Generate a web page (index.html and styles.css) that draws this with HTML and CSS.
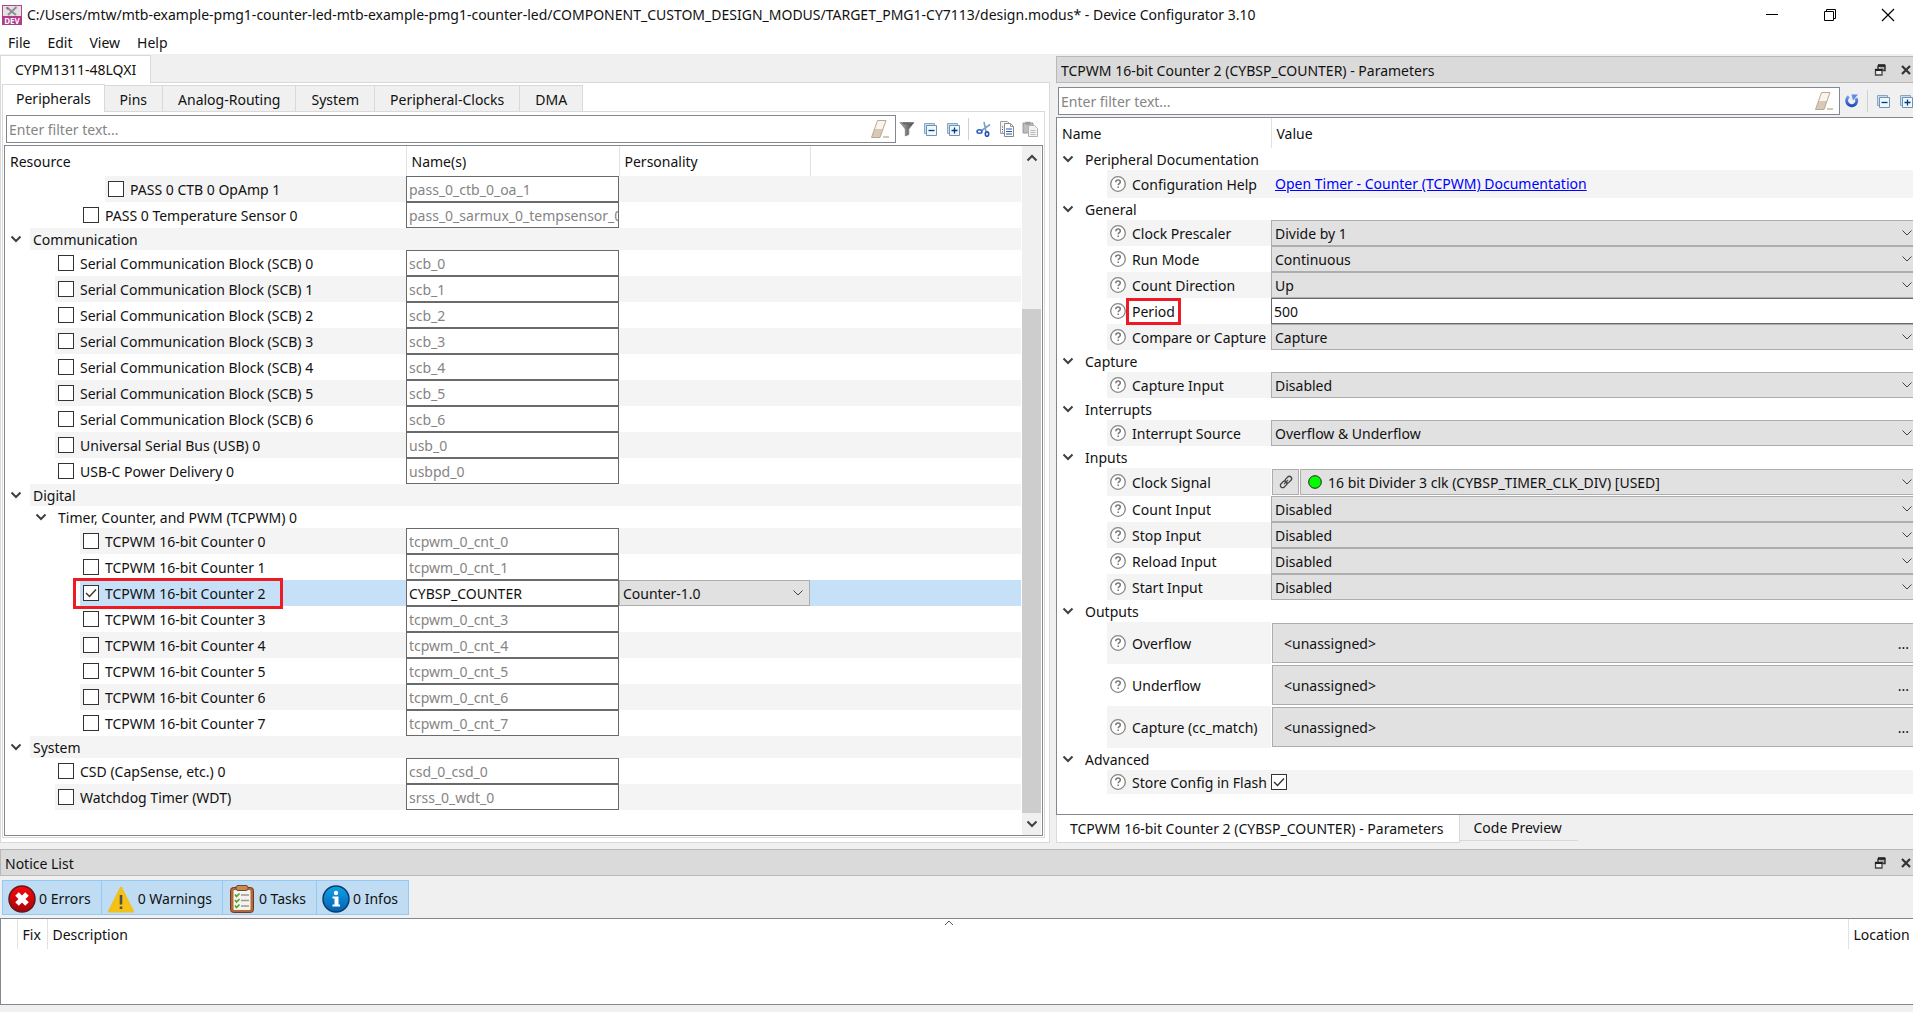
FILE: index.html
```html
<!DOCTYPE html>
<html lang="en">
<head>
<meta charset="utf-8">
<meta name="viewport" content="width=device-width, initial-scale=1">
<title>Device Configurator 3.10</title>
<link rel="stylesheet" href="styles.css">
</head>
<body>
<svg class="sprite" aria-hidden="true">
  <defs>
    <linearGradient id="g-eraser" x1="0" y1="0" x2="0" y2="1"><stop offset="0.5" stop-color="#faf4ec"/><stop offset="0.5" stop-color="#d8c8b6"/></linearGradient>
    <linearGradient id="g-funnel" x1="0" x2="1"><stop offset="0" stop-color="#b5b5b5"/><stop offset="1" stop-color="#3c3c3c"/></linearGradient>
    <linearGradient id="g-reload" x1="0" y1="0" x2="0" y2="1"><stop offset="0" stop-color="#6f9bee"/><stop offset="1" stop-color="#1f4fc0"/></linearGradient>
    <linearGradient id="g-error" x1="0" y1="0" x2="0" y2="1"><stop offset="0" stop-color="#f8090c"/><stop offset="1" stop-color="#a80308"/></linearGradient>
    <linearGradient id="g-info" x1="0" y1="0" x2="0" y2="1"><stop offset="0" stop-color="#0ea2e8"/><stop offset="1" stop-color="#0560b4"/></linearGradient>
    <symbol id="i-chev" viewBox="0 0 12 8"><path d="M1.500 1.500 6 6l4.500-4.500" fill="none" stroke="#404040" stroke-width="2"/></symbol>
    <symbol id="i-help" viewBox="0 0 16 16"><circle cx="8" cy="8" r="7.300" fill="#fff" stroke="#858585" stroke-width="1.300"/><path d="M5.800 6.300c0-1.400 1-2.200 2.300-2.200s2.200.8 2.200 1.900c0 1.600-2.100 1.600-2.100 3.200M8.200 10.400v1.600" fill="none" stroke="#777" stroke-width="1.500"/></symbol>
    <symbol id="i-eraser" viewBox="0 0 20 20"><path d="M7.500 1.500h8.500L10 18.500H1.500z" fill="url(#g-eraser)" stroke="#b9a894"/><path d="M13 18h6" stroke="#c5b49e" stroke-width="1.500"/></symbol>
    <symbol id="i-funnel" viewBox="0 0 16 16"><path d="M1 1.500h14L9.800 8v5.500L6.300 15V8z" fill="url(#g-funnel)" stroke="#777" stroke-width=".7"/><ellipse cx="8" cy="2.500" rx="5" ry="1" fill="#666"/></symbol>
    <symbol id="i-collapse" viewBox="0 0 16 16"><path d="M2.500 2.500h10v10h-10z" fill="#bfe0f8" stroke="#8aa6c0"/><path d="M4.500 4.500h10v10h-10z" fill="#eef8ff" stroke="#7690b0"/><path d="M6.500 9.500h6" stroke="#003c78" stroke-width="1.300"/></symbol>
    <symbol id="i-expand" viewBox="0 0 16 16"><path d="M2.500 2.500h10v10h-10z" fill="#bfe0f8" stroke="#8aa6c0"/><path d="M4.500 4.500h10v10h-10z" fill="#eef8ff" stroke="#7690b0"/><path d="M6.500 9.500h6M9.500 6.500v6" stroke="#003c78" stroke-width="1.300"/></symbol>
    <symbol id="i-cut" viewBox="0 0 16 16"><path d="M8 1 10 10.500M14 3.500 5 10" stroke="#7f9cc8" stroke-width="1.600"/><ellipse cx="3.500" cy="10.500" rx="2.500" ry="1.700" fill="none" stroke="#2a62c0" stroke-width="1.600"/><ellipse cx="11" cy="13" rx="1.700" ry="2.300" fill="none" stroke="#1c4fae" stroke-width="1.600"/></symbol>
    <symbol id="i-copy" viewBox="0 0 16 16"><path d="M1.500.5h7l2 2v10h-9z" fill="#f4f4f4" stroke="#a0a0a0"/><path d="M5.500 2.500h6l3 3v10h-9z" fill="#fff" stroke="#888"/><path d="M11.500 2.500v3h3" fill="none" stroke="#999"/><path d="M7 8h6M7 10.500h6M7 13h6M3 6h1M3 8.500h1M3 11h1" stroke="#2b57a8" stroke-width="1.200"/></symbol>
    <symbol id="i-paste" viewBox="0 0 16 16"><path d="M1 2h10v10H1z" fill="#bdbdbd" stroke="#999"/><path d="M3.500.8h5v3h-5z" fill="#9b9b9b"/><path d="M6.500 4.500h6l3 3v8h-9z" fill="#f2f2f2" stroke="#b0b0b0"/><path d="M8.500 9.500h5M8.500 11.500h5M8.500 13.500h5" stroke="#bbb"/></symbol>
    <symbol id="i-reload" viewBox="0 0 16 16"><path d="M4.800 3.600A5 5 0 1 0 12 5.200" fill="none" stroke="url(#g-reload)" stroke-width="3"/><path d="M7.500 1.500H14L9 7.500z" fill="#5d8ce8"/></symbol>
    <symbol id="i-float" viewBox="0 0 14 14"><path d="M5 2.500h7v5H9.500M5 2.500V6" fill="#aaa" stroke="#333" stroke-width="1.500"/><path d="M5 2.500h7" stroke="#222" stroke-width="2.500"/><path d="M2.500 6.500H9V12H2.500z" fill="#eee" stroke="#444" stroke-width="1.300"/><path d="M2 7h7.500" stroke="#222" stroke-width="2"/></symbol>
    <symbol id="i-close" viewBox="0 0 14 14"><path d="m3 3 8 8M11 3l-8 8" stroke="#333" stroke-width="2.200"/></symbol>
    <symbol id="i-link" viewBox="0 0 16 16"><g transform="rotate(-45 8 8)" fill="none" stroke="#444"><rect x="1" y="5.700" width="7.500" height="4.600" rx="2.300" stroke-width="1.300"/><rect x="7.500" y="5.700" width="7.500" height="4.600" rx="2.300" stroke-width="1.300"/><path d="M5 8h6"/></g></symbol>
  </defs>
</svg>

<header class="titlebar">
  <svg class="app-icon" viewBox="0 0 20 20" aria-hidden="true">
    <rect x=".5" y=".5" width="19" height="19" fill="#e4e0e4" stroke="#b6458f"/>
    <path d="M5 2.500 14 10M14.500 2 6 10" stroke="#8f8f96" stroke-width="2"/><path d="m4 2 3 1-2 2z" fill="#777"/>
    <rect y="11" width="20" height="9" fill="#b23a8b"/>
    <text x="10" y="18.500" text-anchor="middle" class="app-icon-text">DEV</text>
  </svg>
  <h1 class="title">C:/Users/mtw/mtb-example-pmg1-counter-led-mtb-example-pmg1-counter-led/COMPONENT_CUSTOM_DESIGN_MODUS/TARGET_PMG1-CY7113/design.modus* - Device Configurator 3.10</h1>
  <div class="win-buttons">
    <button class="win-btn" aria-label="Minimize"><svg viewBox="0 0 14 14"><path d="M1 6.500h12" stroke="#000"/></svg></button>
    <button class="win-btn" aria-label="Restore"><svg viewBox="0 0 14 14"><path d="M1.500 3.500h9v9h-9zM3.500 3.500v-2h9v9h-2" fill="none" stroke="#000"/></svg></button>
    <button class="win-btn" aria-label="Close"><svg viewBox="0 0 14 14"><path d="m1 1 12 12M13 1 1 13" stroke="#000" stroke-width="1.200"/></svg></button>
  </div>
</header>
<nav class="menubar">
  <button>File</button><button>Edit</button><button>View</button><button>Help</button>
</nav>

<main class="workspace">
  <section class="device">
    <div class="tabs"><button class="tab tab-device active">CYPM1311-48LQXI</button></div>
    <div class="device-pane">
      <div class="tabs">
        <button class="tab active">Peripherals</button><button class="tab">Pins</button><button class="tab">Analog-Routing</button><button class="tab">System</button><button class="tab">Peripheral-Clocks</button><button class="tab">DMA</button>
      </div>
      <div class="resource-pane">
        <div class="toolbar">
          <div class="filter"><input type="text" placeholder="Enter filter text..." aria-label="Filter resources"><button class="icon-btn wide" aria-label="Clear"><svg><use href="#i-eraser"/></svg></button></div>
          <button class="icon-btn" aria-label="Filter"><svg><use href="#i-funnel"/></svg></button>
          <button class="icon-btn" aria-label="Collapse all"><svg><use href="#i-collapse"/></svg></button>
          <button class="icon-btn" aria-label="Expand all"><svg><use href="#i-expand"/></svg></button>
          <span class="sep"></span>
          <button class="icon-btn" aria-label="Cut"><svg><use href="#i-cut"/></svg></button>
          <button class="icon-btn" aria-label="Copy"><svg><use href="#i-copy"/></svg></button>
          <button class="icon-btn" aria-label="Paste"><svg><use href="#i-paste"/></svg></button>
        </div>
        <div class="resource-box">
          <table class="grid resources">
            <colgroup><col class="c-resource"><col class="c-name"><col class="c-personality"><col></colgroup>
            <thead><tr><th>Resource</th><th>Name(s)</th><th>Personality</th><th></th></tr></thead>
            <tbody>
              <tr class="odd"><td><div class="cell l4"><input type="checkbox" id="r1"><label for="r1">PASS 0 CTB 0 OpAmp 1</label></div></td><td><input class="name" type="text" placeholder="pass_0_ctb_0_oa_1" aria-label="Name"></td><td></td><td></td></tr>
              <tr><td><div class="cell l3"><input type="checkbox" id="r2"><label for="r2">PASS 0 Temperature Sensor 0</label></div></td><td><input class="name" type="text" placeholder="pass_0_sarmux_0_tempsensor_0" aria-label="Name"></td><td></td><td></td></tr>
              <tr class="group odd"><td><div class="node"><svg class="chev"><use href="#i-chev"/></svg><span class="cell">Communication</span></div></td><td></td><td></td><td></td></tr>
              <tr><td><div class="cell l2"><input type="checkbox" id="r3"><label for="r3">Serial Communication Block (SCB) 0</label></div></td><td><input class="name" type="text" placeholder="scb_0" aria-label="Name"></td><td></td><td></td></tr>
              <tr class="odd"><td><div class="cell l2"><input type="checkbox" id="r4"><label for="r4">Serial Communication Block (SCB) 1</label></div></td><td><input class="name" type="text" placeholder="scb_1" aria-label="Name"></td><td></td><td></td></tr>
              <tr><td><div class="cell l2"><input type="checkbox" id="r5"><label for="r5">Serial Communication Block (SCB) 2</label></div></td><td><input class="name" type="text" placeholder="scb_2" aria-label="Name"></td><td></td><td></td></tr>
              <tr class="odd"><td><div class="cell l2"><input type="checkbox" id="r6"><label for="r6">Serial Communication Block (SCB) 3</label></div></td><td><input class="name" type="text" placeholder="scb_3" aria-label="Name"></td><td></td><td></td></tr>
              <tr><td><div class="cell l2"><input type="checkbox" id="r7"><label for="r7">Serial Communication Block (SCB) 4</label></div></td><td><input class="name" type="text" placeholder="scb_4" aria-label="Name"></td><td></td><td></td></tr>
              <tr class="odd"><td><div class="cell l2"><input type="checkbox" id="r8"><label for="r8">Serial Communication Block (SCB) 5</label></div></td><td><input class="name" type="text" placeholder="scb_5" aria-label="Name"></td><td></td><td></td></tr>
              <tr><td><div class="cell l2"><input type="checkbox" id="r9"><label for="r9">Serial Communication Block (SCB) 6</label></div></td><td><input class="name" type="text" placeholder="scb_6" aria-label="Name"></td><td></td><td></td></tr>
              <tr class="odd"><td><div class="cell l2"><input type="checkbox" id="r10"><label for="r10">Universal Serial Bus (USB) 0</label></div></td><td><input class="name" type="text" placeholder="usb_0" aria-label="Name"></td><td></td><td></td></tr>
              <tr><td><div class="cell l2"><input type="checkbox" id="r11"><label for="r11">USB-C Power Delivery 0</label></div></td><td><input class="name" type="text" placeholder="usbpd_0" aria-label="Name"></td><td></td><td></td></tr>
              <tr class="group odd"><td><div class="node"><svg class="chev"><use href="#i-chev"/></svg><span class="cell">Digital</span></div></td><td></td><td></td><td></td></tr>
              <tr class="group"><td><div class="node sub"><svg class="chev"><use href="#i-chev"/></svg><span class="cell">Timer, Counter, and PWM (TCPWM) 0</span></div></td><td></td><td></td><td></td></tr>
              <tr class="odd"><td><div class="cell l3"><input type="checkbox" id="r12"><label for="r12">TCPWM 16-bit Counter 0</label></div></td><td><input class="name" type="text" placeholder="tcpwm_0_cnt_0" aria-label="Name"></td><td></td><td></td></tr>
              <tr><td><div class="cell l3"><input type="checkbox" id="r13"><label for="r13">TCPWM 16-bit Counter 1</label></div></td><td><input class="name" type="text" placeholder="tcpwm_0_cnt_1" aria-label="Name"></td><td></td><td></td></tr>
              <tr class="selected"><td><div class="cell l3"><input type="checkbox" id="r14" checked><label for="r14">TCPWM 16-bit Counter 2</label><span class="mark mark-row"></span></div></td><td><input class="name" type="text" value="CYBSP_COUNTER" aria-label="Name"></td><td><select class="combo" aria-label="Personality"><option>Counter-1.0</option></select></td><td></td></tr>
              <tr><td><div class="cell l3"><input type="checkbox" id="r15"><label for="r15">TCPWM 16-bit Counter 3</label></div></td><td><input class="name" type="text" placeholder="tcpwm_0_cnt_3" aria-label="Name"></td><td></td><td></td></tr>
              <tr class="odd"><td><div class="cell l3"><input type="checkbox" id="r16"><label for="r16">TCPWM 16-bit Counter 4</label></div></td><td><input class="name" type="text" placeholder="tcpwm_0_cnt_4" aria-label="Name"></td><td></td><td></td></tr>
              <tr><td><div class="cell l3"><input type="checkbox" id="r17"><label for="r17">TCPWM 16-bit Counter 5</label></div></td><td><input class="name" type="text" placeholder="tcpwm_0_cnt_5" aria-label="Name"></td><td></td><td></td></tr>
              <tr class="odd"><td><div class="cell l3"><input type="checkbox" id="r18"><label for="r18">TCPWM 16-bit Counter 6</label></div></td><td><input class="name" type="text" placeholder="tcpwm_0_cnt_6" aria-label="Name"></td><td></td><td></td></tr>
              <tr><td><div class="cell l3"><input type="checkbox" id="r19"><label for="r19">TCPWM 16-bit Counter 7</label></div></td><td><input class="name" type="text" placeholder="tcpwm_0_cnt_7" aria-label="Name"></td><td></td><td></td></tr>
              <tr class="group odd"><td><div class="node"><svg class="chev"><use href="#i-chev"/></svg><span class="cell">System</span></div></td><td></td><td></td><td></td></tr>
              <tr><td><div class="cell l2"><input type="checkbox" id="r20"><label for="r20">CSD (CapSense, etc.) 0</label></div></td><td><input class="name" type="text" placeholder="csd_0_csd_0" aria-label="Name"></td><td></td><td></td></tr>
              <tr class="odd"><td><div class="cell l2"><input type="checkbox" id="r21"><label for="r21">Watchdog Timer (WDT)</label></div></td><td><input class="name" type="text" placeholder="srss_0_wdt_0" aria-label="Name"></td><td></td><td></td></tr>
            </tbody>
          </table>
          <div class="scrollbar">
            <svg class="chev up"><use href="#i-chev"/></svg>
            <div class="track"><div class="thumb"></div></div>
            <svg class="chev"><use href="#i-chev"/></svg>
          </div>
        </div>
      </div>
    </div>
  </section>

  <section class="params">
    <div class="dock-title"><h2>TCPWM 16-bit Counter 2 (CYBSP_COUNTER) - Parameters</h2>
      <button class="dock-btn" aria-label="Float"><svg><use href="#i-float"/></svg></button><button class="dock-btn" aria-label="Close"><svg><use href="#i-close"/></svg></button></div>
    <div class="toolbar params-toolbar">
      <div class="filter"><input type="text" placeholder="Enter filter text..." aria-label="Filter parameters"><button class="icon-btn wide" aria-label="Clear"><svg><use href="#i-eraser"/></svg></button></div>
      <button class="icon-btn" aria-label="Reset"><svg><use href="#i-reload"/></svg></button>
      <span class="sep"></span>
      <button class="icon-btn" aria-label="Collapse all"><svg><use href="#i-collapse"/></svg></button>
      <button class="icon-btn clipped" aria-label="Expand all"><svg><use href="#i-expand"/></svg></button>
    </div>
    <div class="params-box">
      <table class="grid parameters">
        <colgroup><col class="c-param"><col></colgroup>
        <thead><tr><th>Name</th><th>Value</th></tr></thead>
        <tbody>
          <tr class="group"><td colspan="2"><div class="node"><svg class="chev"><use href="#i-chev"/></svg><span>Peripheral Documentation</span></div></td></tr>
          <tr class="odd tall"><td><div class="cell"><svg class="help"><use href="#i-help"/></svg><span>Configuration Help</span></div></td><td class="link-cell"><a href="#">Open Timer - Counter (TCPWM) Documentation</a></td></tr>
          <tr class="group"><td colspan="2"><div class="node"><svg class="chev"><use href="#i-chev"/></svg><span>General</span></div></td></tr>
          <tr class="odd"><td><div class="cell"><svg class="help"><use href="#i-help"/></svg><label for="p1">Clock Prescaler</label></div></td><td><select class="combo" id="p1"><option>Divide by 1</option></select></td></tr>
          <tr><td><div class="cell"><svg class="help"><use href="#i-help"/></svg><label for="p2">Run Mode</label></div></td><td><select class="combo" id="p2"><option>Continuous</option></select></td></tr>
          <tr class="odd"><td><div class="cell"><svg class="help"><use href="#i-help"/></svg><label for="p3">Count Direction</label></div></td><td><select class="combo" id="p3"><option>Up</option></select></td></tr>
          <tr><td><div class="cell"><svg class="help"><use href="#i-help"/></svg><label for="p4" class="marked">Period<span class="mark mark-label"></span></label></div></td><td><input class="name open" type="text" id="p4" value="500"></td></tr>
          <tr class="odd"><td><div class="cell"><svg class="help"><use href="#i-help"/></svg><label for="p5">Compare or Capture</label></div></td><td><select class="combo" id="p5"><option>Capture</option></select></td></tr>
          <tr class="group"><td colspan="2"><div class="node"><svg class="chev"><use href="#i-chev"/></svg><span>Capture</span></div></td></tr>
          <tr class="odd"><td><div class="cell"><svg class="help"><use href="#i-help"/></svg><label for="p6">Capture Input</label></div></td><td><select class="combo" id="p6"><option>Disabled</option></select></td></tr>
          <tr class="group"><td colspan="2"><div class="node"><svg class="chev"><use href="#i-chev"/></svg><span>Interrupts</span></div></td></tr>
          <tr class="odd"><td><div class="cell"><svg class="help"><use href="#i-help"/></svg><label for="p7">Interrupt Source</label></div></td><td><select class="combo" id="p7"><option>Overflow &amp; Underflow</option></select></td></tr>
          <tr class="group"><td colspan="2"><div class="node"><svg class="chev"><use href="#i-chev"/></svg><span>Inputs</span></div></td></tr>
          <tr class="odd tall"><td><div class="cell"><svg class="help"><use href="#i-help"/></svg><label for="p8">Clock Signal</label></div></td><td class="plain"><div class="clock"><button class="link-btn" aria-label="Go to clock"><svg><use href="#i-link"/></svg></button><select class="combo dot" id="p8"><option>16 bit Divider 3 clk (CYBSP_TIMER_CLK_DIV) [USED]</option></select></div></td></tr>
          <tr><td><div class="cell"><svg class="help"><use href="#i-help"/></svg><label for="p9">Count Input</label></div></td><td><select class="combo" id="p9"><option>Disabled</option></select></td></tr>
          <tr class="odd"><td><div class="cell"><svg class="help"><use href="#i-help"/></svg><label for="p10">Stop Input</label></div></td><td><select class="combo" id="p10"><option>Disabled</option></select></td></tr>
          <tr><td><div class="cell"><svg class="help"><use href="#i-help"/></svg><label for="p11">Reload Input</label></div></td><td><select class="combo" id="p11"><option>Disabled</option></select></td></tr>
          <tr class="odd"><td><div class="cell"><svg class="help"><use href="#i-help"/></svg><label for="p12">Start Input</label></div></td><td><select class="combo" id="p12"><option>Disabled</option></select></td></tr>
          <tr class="group"><td colspan="2"><div class="node"><svg class="chev"><use href="#i-chev"/></svg><span>Outputs</span></div></td></tr>
          <tr class="odd signal"><td><div class="cell"><svg class="help"><use href="#i-help"/></svg><span>Overflow</span></div></td><td class="plain"><button class="assign"><span>&lt;unassigned&gt;</span><span>...</span></button></td></tr>
          <tr class="signal"><td><div class="cell"><svg class="help"><use href="#i-help"/></svg><span>Underflow</span></div></td><td class="plain"><button class="assign"><span>&lt;unassigned&gt;</span><span>...</span></button></td></tr>
          <tr class="odd signal"><td><div class="cell"><svg class="help"><use href="#i-help"/></svg><span>Capture (cc_match)</span></div></td><td class="plain"><button class="assign"><span>&lt;unassigned&gt;</span><span>...</span></button></td></tr>
          <tr class="group"><td colspan="2"><div class="node"><svg class="chev"><use href="#i-chev"/></svg><span>Advanced</span></div></td></tr>
          <tr class="odd flash"><td><div class="cell"><svg class="help"><use href="#i-help"/></svg><label for="p13">Store Config in Flash</label></div></td><td><input type="checkbox" id="p13" checked></td></tr>
        </tbody>
      </table>
    </div>
    <div class="bottom-tabs"><button class="btab active">TCPWM 16-bit Counter 2 (CYBSP_COUNTER) - Parameters</button><button class="btab">Code Preview</button></div>
  </section>
</main>

<section class="notices">
  <div class="dock-title"><h2>Notice List</h2>
    <button class="dock-btn" aria-label="Float"><svg><use href="#i-float"/></svg></button><button class="dock-btn" aria-label="Close"><svg><use href="#i-close"/></svg></button></div>
  <div class="notice-filters">
    <button class="notice"><svg viewBox="0 0 28 28"><circle cx="14" cy="14" r="13" fill="url(#g-error)" stroke="#5c1a22" stroke-width="1.500"/><path d="m9 9 10 10M19 9 9 19" stroke="#fff" stroke-width="5"/></svg>0 Errors</button>
    <button class="notice"><svg viewBox="0 0 28 28"><path d="M14 2.500 26 26.500H2z" fill="#f5c211" stroke="#f0c020" stroke-width="2" stroke-linejoin="round"/><path d="M14 10v9.500M14 21.500v2.500" stroke="#4c5157" stroke-width="2.600"/></svg>0 Warnings</button>
    <button class="notice"><svg viewBox="0 0 28 28"><rect x="2.500" y="2.500" width="23" height="25" rx="3" fill="#b3683a" stroke="#6e3a1c"/><rect x="5.500" y="5" width="17" height="20" rx="1" fill="#f5f3ee"/><rect x="8" y=".5" width="12" height="5" rx="2" fill="#c88a55" stroke="#6e4a2c"/><path d="M13 10h8M13 15.500h8M13 21h8" stroke="#999" stroke-width="1.300"/><path d="m7 9.500 1.500 2 3-3M7 15l1.500 2 3-3M7 20.500l1.500 2 3-3" fill="none" stroke="#4da12a" stroke-width="1.600"/></svg>0 Tasks</button>
    <button class="notice"><svg viewBox="0 0 28 28"><circle cx="14" cy="14" r="13" fill="url(#g-info)" stroke="#0b3c66" stroke-width="1.500"/><circle cx="14" cy="8" r="2.200" fill="#fff"/><path d="M10.500 12.500h5v8M10.500 20.500h7.500" fill="none" stroke="#fff" stroke-width="2"/><path d="M14 12v9" stroke="#fff" stroke-width="3"/></svg>0 Infos</button>
  </div>
  <div class="notice-box">
    <table class="grid notice-table">
      <colgroup><col class="c-icon"><col class="c-fix"><col><col class="c-location"></colgroup>
      <thead><tr><th></th><th>Fix</th><th>Description</th><th>Location</th></tr></thead>
      <tbody></tbody>
    </table>
    <svg class="sort-mark" viewBox="0 0 10 6" aria-hidden="true"><path d="m1 5 4-4 4 4" fill="none" stroke="#555"/></svg>
  </div>
</section>
</body>
</html>
```
FILE: styles.css
```css
* { box-sizing: border-box; }
body {
  margin: 0; min-height: 100vh; display: flex; flex-direction: column;
  background: #f0f0f0; color: #111; overflow-x: hidden;
  font: 14px/20px "Noto Sans", "Open Sans", sans-serif;
}
button, input, select { font: inherit; color: inherit; margin: 0; }
button { background: none; border: 0; padding: 0; white-space: nowrap; }
h1, h2 { margin: 0; font-size: 14px; font-weight: 400; white-space: nowrap; overflow: hidden; }
svg { display: block; flex: none; }
.sprite { position: absolute; width: 0; height: 0; }

/* Title bar and menu */
.titlebar { display: flex; align-items: center; height: 30px; padding-left: 2px; gap: 5px; background: #fff; }
.app-icon { width: 20px; height: 20px; }
.app-icon-text { font: 700 8px "Open Sans", sans-serif; fill: #fff; }
.title { flex: 1; }
.win-buttons { display: flex; gap: 8px; }
.win-btn { width: 50px; height: 30px; display: grid; place-items: center; }
.win-btn svg { width: 14px; height: 14px; }
.menubar { display: flex; gap: 17px; height: 24px; padding: 1px 8px 0; background: #fff; }

/* Main split */
.workspace { display: grid; grid-template-columns: minmax(0, 1050fr) minmax(0, 857fr); column-gap: 6px; flex: 1; padding-top: 1px; }
.device { display: flex; flex-direction: column; min-width: 0; }
.tabs { display: flex; align-items: flex-end; }
.tab { height: 26px; padding: 2px 15px 0; background: #f0f0f0; border: 1px solid #d9d9d9; border-left-width: 0; border-bottom: 0; }
.tab.active { height: 28px; padding: 0 13px; margin-bottom: -1px; border-left-width: 1px; background: #fff; position: relative; }
.tab.tab-device { padding: 0 14px; }
.device-pane { flex: 1; display: flex; flex-direction: column; padding: 1px 4px 4px 1px; background: #fff; border: 1px solid #d9d9d9; }
.resource-pane { flex: 1; display: flex; flex-direction: column; padding: 3px 1px 1px; border: 1px solid #d9d9d9; }
.toolbar { display: flex; align-items: center; gap: 7px; padding: 0 5px 0 2px; height: 28px; }
.filter { display: flex; flex: 1; align-items: center; height: 28px; padding-right: 5px; margin-right: -4px; background: #fff; border: 1px solid #828790; }
.filter input { flex: 1; min-width: 0; border: 0; padding: 2px 2px 0; background: none; outline: 0; }
::placeholder { color: #858585; opacity: 1; }
.icon-btn, .icon-btn svg { width: 16px; height: 16px; }
.icon-btn.wide, .icon-btn.wide svg { width: 20px; height: 20px; }
.sep { width: 1px; height: 22px; background: #d0d0d0; }
.resource-box { flex: 1; display: flex; margin-top: 2px; background: #fff; border: 1px solid #828790; }

/* Tree grids */
.grid { table-layout: fixed; border-collapse: collapse; width: 100%; }
.grid th { height: 30px; padding: 2px 5px 0; text-align: left; font-weight: 400; border-right: 1px solid #e2e2e2; }
.grid th:last-child { border-right: 0; }
.grid td { height: 26px; padding: 0; white-space: nowrap; }
.grid .group td, .grid .group .cell { height: 22px; }
.grid tr.tall > td, .tall .cell { height: 28px; }
.grid tr.signal > td, .signal .cell { height: 42px; }
.grid tr.flash > td, .flash .cell { height: 24px; }
.resources { flex: 1; width: auto; align-self: flex-start; }
.c-resource { width: 401px; }
.c-name { width: 213px; }
.c-personality { width: 191px; }
.c-param { width: 214px; }
.cell { display: flex; align-items: center; height: 26px; position: relative; }
.cell > label, .cell > span, .node > span { padding-top: 2px; }
.odd .cell, .odd td:not(:first-child) { background: #f4f4f4; }
.selected .cell, .selected td:not(:first-child) { background: #c6e0f7; }
.cell.l2, .cell.l3, .cell.l4 { gap: 6px; padding-left: 3px; }
.cell.l2 { margin-left: 50px; }
.cell.l3 { margin-left: 75px; }
.cell.l4 { margin-left: 100px; }
.node { display: flex; align-items: center; height: 22px; padding-left: 5px; }
.node .chev { margin-right: 8px; }
.node .cell { flex: 1; padding-left: 3px; }
.node.sub { padding-left: 30px; }
.chev { width: 12px; height: 8px; }
input[type="checkbox"] { appearance: none; flex: none; width: 16px; height: 16px; background: #fff; border: 1px solid #333; display: block; }
input[type="checkbox"]:checked { background-image: url("data:image/svg+xml,%3Csvg xmlns='http://www.w3.org/2000/svg' viewBox='0 0 14 14'%3E%3Cpath d='M2 7l3.500 3.500L12 3.500' fill='none' stroke='%23333' stroke-width='1.400'/%3E%3C/svg%3E"); }
.name { display: block; width: 100%; height: 26px; padding: 0 0 0 2px; background: #fff; border: 1px solid #6a6a6a; border-radius: 0; outline: 0; }
.name.open { border-right: 0; }
.combo {
  appearance: none; display: block; width: 100%; height: 26px; padding: 1px 20px 0 3px; border: 1px solid #adadad; border-radius: 0; outline: 0;
  background: #e1e1e1 url("data:image/svg+xml,%3Csvg xmlns='http://www.w3.org/2000/svg' viewBox='0 0 10 6'%3E%3Cpath d='M.5 .5L5 5l4.500-4.500' fill='none' stroke='%23444'/%3E%3C/svg%3E") no-repeat right 6px center / 10px 6px;
}
.parameters .combo { border-right: 0; background-position: right 1px center; }
.mark { position: absolute; border: 3px solid #ed1c24; pointer-events: none; }
.mark-row { left: -7px; top: -2px; width: 210px; height: 31px; z-index: 1; }
.mark-label { left: -6px; right: -6px; top: -2px; bottom: -3px; z-index: 1; }
.marked { position: relative; }

.scrollbar { width: 20px; display: flex; flex-direction: column; align-items: center; padding: 8px 0 7px; margin-left: 1px; border-right: 1px solid #fff; background: #f0f0f0; }
.scrollbar .up { transform: rotate(180deg); }
.track { flex: 1; align-self: stretch; display: flex; flex-direction: column; justify-content: flex-end; margin: 5px 0 7px; }
.thumb { height: 78%; background: #cdcdcd; }

/* Parameters dock */
.params { display: flex; flex-direction: column; min-width: 0; overflow: hidden; padding-top: 1px; }
.dock-title { display: flex; align-items: center; gap: 12px; height: 27px; padding-left: 4px; background: #dadada; border: 1px solid #b8b8b8; border-right: 0; }
.dock-title h2 { flex: 1; padding-top: 2px; }
.dock-btn, .dock-btn svg { width: 14px; height: 14px; }
.params-toolbar { margin-top: 4px; padding-right: 0; }
.params-toolbar .filter { margin-right: -3px; }
.icon-btn.clipped { width: 15px; overflow: hidden; }
.params-box { flex: 1; margin-top: 2px; background: #fff; border: 1px solid #828790; border-right: 0; }
.parameters .cell { margin-left: 50px; padding-left: 3px; gap: 6px; }
.parameters .node .chev { margin-right: 11px; }
.help { width: 16px; height: 16px; }
.link-cell a { color: #00f; padding-left: 4px; }
.odd td.plain:nth-child(2) { background: #fff; }
.grid td.plain { padding-left: 1px; }
.clock { display: flex; gap: 1px; }
.link-btn { width: 27px; height: 26px; display: grid; place-items: center; background: #e1e1e1; border: 1px solid #adadad; }
.link-btn svg { width: 16px; height: 16px; }
.combo.dot {
  flex: 1; min-width: 0; padding-left: 27px;
  background-image: url("data:image/svg+xml,%3Csvg xmlns='http://www.w3.org/2000/svg' viewBox='0 0 10 6'%3E%3Cpath d='M.5 .5L5 5l4.500-4.500' fill='none' stroke='%23444'/%3E%3C/svg%3E"), url("data:image/svg+xml,%3Csvg xmlns='http://www.w3.org/2000/svg' viewBox='0 0 14 14'%3E%3Ccircle cx='7' cy='7' r='6.300' fill='%2300ff00' stroke='%23222'/%3E%3C/svg%3E");
  background-position: right 1px center, 7px center; background-size: 10px 6px, 14px 14px;
}
.assign { display: flex; align-items: center; justify-content: space-between; width: 100%; height: 40px; padding: 2px 4px 0 11px; background: #e1e1e1; border: 1px solid #adadad; border-right: 0; }
.bottom-tabs { display: flex; align-items: flex-start; }
.btab { height: 26px; padding: 0 16px 0 13px; border-bottom: 1px solid #d9d9d9; }
.btab.active { height: 28px; background: #fff; border: 1px solid #d9d9d9; border-top: 0; }

/* Notice list */
.notices { margin-top: 6px; padding-bottom: 7px; }
.notice-filters { display: flex; padding: 4px 2px 3px; }
.notice { display: flex; align-items: center; gap: 3px; height: 35px; padding: 2px 10px 0 5px; background: #bfdcf3; border: 1px solid #91c9f7; }
.notice svg { width: 28px; height: 28px; }
.notice + .notice { border-left-width: 0; }
.notice-box { position: relative; height: 87px; background: #fff; border: 1px solid #828790; border-right: 0; }
.c-icon { width: 16px; }
.c-fix { width: 30px; }
.c-location { width: 65px; }
.sort-mark { position: absolute; left: 50%; top: 1px; width: 10px; height: 6px; margin-left: -13px; }
```
